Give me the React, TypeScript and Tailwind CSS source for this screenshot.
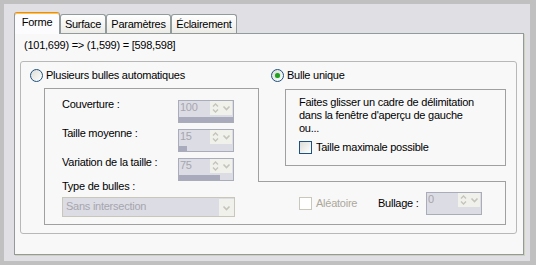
import React from "react";

function UpDown() {
  return (
    <svg width="11" height="14" viewBox="0 0 11 14">
      <path d="M3 5.5 L5.5 3 L8 5.5" fill="none" stroke="#c4c4bc" strokeWidth="1.4" />
      <path d="M3 8.5 L5.5 11 L8 8.5" fill="none" stroke="#c4c4bc" strokeWidth="1.4" />
    </svg>
  );
}

function Chevron() {
  return (
    <svg width="11" height="14" viewBox="0 0 11 14">
      <path d="M2.5 5.5 L5.5 8.5 L8.5 5.5" fill="none" stroke="#c4c4bc" strokeWidth="1.6" />
    </svg>
  );
}

function SpinField({ value, fill }: { value: string; fill: number }) {
  return (
    <div className="w-[56px] h-[23px] border border-[#a9adba] bg-[#dcdce4] flex flex-col">
      <div className="flex h-[16px]">
        <span className="flex-1 pl-[1px] text-[#a6a6ae]">{value}</span>
        <div className="flex h-[14px] mr-[1px] bg-[#f1f1ec]">
          <UpDown />
          <Chevron />
        </div>
      </div>
      <div className="h-[5px] mt-auto">
        <div className="h-full bg-[#a9abbc]" style={{ width: `${fill}%` }} />
      </div>
    </div>
  );
}

function Radio({ checked }: { checked?: boolean }) {
  return (
    <span className="w-[13px] h-[13px] rounded-full border border-[#1c5180] bg-gradient-to-br from-[#dcdcd7] to-white flex items-center justify-center shrink-0">
      {checked && <span className="w-[5px] h-[5px] rounded-full bg-[#21a121] shadow-[0_0_1px_#7fd07f]" />}
    </span>
  );
}

function Checkbox({ disabled }: { disabled?: boolean }) {
  return (
    <span
      className={
        disabled
          ? "w-[13px] h-[13px] border border-[#cac8bb] bg-white shrink-0"
          : "w-[13px] h-[13px] border border-[#1c5180] bg-gradient-to-br from-[#dcdcd7] to-white shrink-0"
      }
    />
  );
}

export default function App() {
  const rows = [
    { label: "Couverture :", value: "100", fill: 100 },
    { label: "Taille moyenne :", value: "15", fill: 15 },
    { label: "Variation de la taille :", value: "75", fill: 76 },
  ];

  return (
    <div className="w-[536px] h-[265px] bg-[#c0c0c0] pt-[4px] pl-[4px] pr-[6px] pb-[4px] font-['Liberation_Sans',Arial,sans-serif] text-[11px] leading-[13px] tracking-[-0.25px] text-black">
      <div className="h-full bg-[#e0dfe3] pt-[8px] pl-[10px] pr-[6px]">
        {/* onglets */}
        <div className="flex items-end h-[21px]">
          <div className="relative z-10 w-[46px] h-[22px] mb-[-1px] rounded-t-[3px] border-x border-t border-[#919b9c] border-t-[#e68b2c] shadow-[inset_0_1px_0_#ffc83c] bg-[#fcfcfe] pt-[3px] text-center">
            Forme
          </div>
          <div className="w-[46px] h-[19px] rounded-t-[3px] border-x border-t border-[#919b9c] bg-gradient-to-b from-white to-[#ecebe6] pt-[3px] text-center">
            Surface
          </div>
          <div className="w-[65px] h-[19px] rounded-t-[3px] border-x border-t border-[#919b9c] bg-gradient-to-b from-white to-[#ecebe6] pt-[3px] text-center">
            Paramètres
          </div>
          <div className="w-[66px] h-[19px] rounded-t-[3px] border-x border-t border-[#919b9c] bg-gradient-to-b from-white to-[#ecebe6] pt-[3px] text-center">
            Éclairement
          </div>
        </div>

        {/* panneau */}
        <div className="h-[222px] border border-[#919b9c] bg-[#f8f8f9] shadow-[1px_1px_0_#d0d0bf] pl-[9px] pt-[5px]">
          <div>(101,699) =&gt; (1,599) = [598,598]</div>

          <div className="mt-[9px] ml-[-4px] w-[497px] h-[173px] border border-[#b8b8b8] rounded-[3px]">
            <div className="flex items-center h-[26px] pl-[9px]">
              <div className="w-[241px] flex items-center gap-[3px]">
                <Radio />
                <span>Plusieurs bulles automatiques</span>
              </div>
              <div className="flex items-center gap-[3px]">
                <Radio checked />
                <span>Bulle unique</span>
              </div>
            </div>

            <div className="flex pl-[23px]">
              {/* cadre gauche */}
              <div className="w-[214px] h-[137px] border-l border-t border-b border-[#a0a0a0] pl-[17px] pt-[9px]">
                <div className="flex flex-col gap-[4px]">
                  {rows.map((r) => (
                    <div key={r.label} className="flex h-[25px]">
                      <span className="w-[116px]">{r.label}</span>
                      <div className="mt-[2px]">
                        <SpinField value={r.value} fill={r.fill} />
                      </div>
                    </div>
                  ))}
                </div>
                <div className="mt-[-1px]">Type de bulles :</div>
                <div className="mt-[4px] w-[173px] h-[20px] border border-[#c9c7ba] bg-[#dcdce4] flex">
                  <span className="flex-1 pl-[3px] pt-[2px] text-[#a6a6ae]">Sans intersection</span>
                  <div className="w-[15px] h-[17px] mt-[1px] bg-[#f1f1ec] flex items-center justify-center">
                    <Chevron />
                  </div>
                </div>
              </div>

              {/* colonne droite */}
              <div className="w-[248px] h-[137px] flex flex-col">
                <div className="h-[93px] border-l border-[#a0a0a0] pl-[26px] pt-[1px]">
                  <div className="w-[221px] h-[77px] border border-[#a0a0a0] pl-[13px] pt-[6px]">
                    <div>
                      Faites glisser un cadre de délimitation
                      <br />
                      dans la fenêtre d'aperçu de gauche
                      <br />
                      ou...
                    </div>
                    <div className="mt-[6px] flex items-center gap-[4px]">
                      <Checkbox />
                      <span>Taille maximale possible</span>
                    </div>
                  </div>
                </div>
                <div className="h-[44px] border-t border-r border-b border-[#a0a0a0] flex items-center pl-[41px]">
                  <Checkbox disabled />
                  <span className="ml-[4px] w-[62px] text-[#aca899]">Aléatoire</span>
                  <span className="w-[48px]">Bullage :</span>
                  <SpinField value="0" fill={0} />
                </div>
              </div>
            </div>
          </div>
        </div>
      </div>
    </div>
  );
}
